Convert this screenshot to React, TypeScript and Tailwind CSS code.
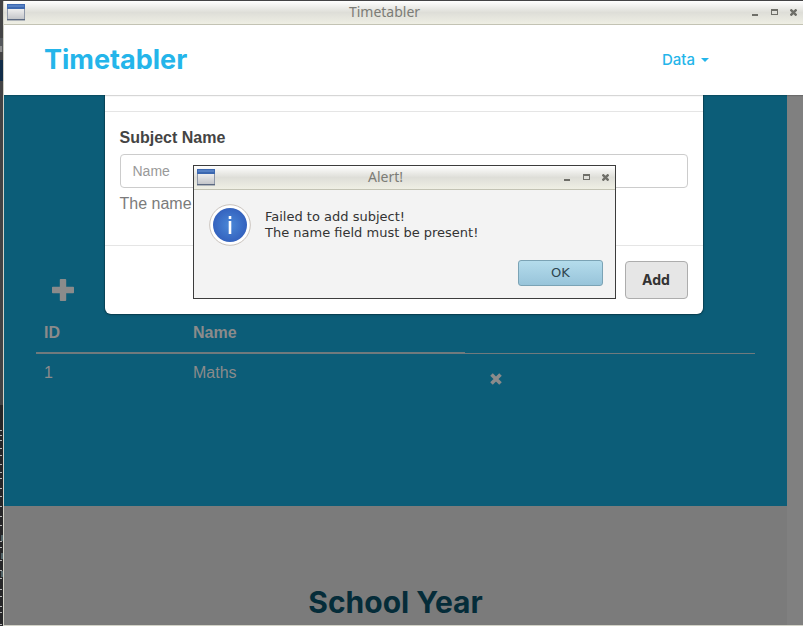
import React from "react";

function WindowIcon() {
  return (
    <svg width="18" height="17" viewBox="0 0 18 17" className="shrink-0" aria-hidden="true">
      <defs>
        <linearGradient id="winBody" x1="0" y1="0" x2="0" y2="1">
          <stop offset="0" stopColor="#eeeeee" />
          <stop offset="1" stopColor="#c4c6ca" />
        </linearGradient>
      </defs>
      <rect x="0" y="0" width="18" height="16" rx="1" fill="#8f98a8" />
      <rect x="1" y="5" width="16" height="10" fill="url(#winBody)" />
      <rect x="0" y="0" width="18" height="5" fill="#3c68b0" />
      <rect x="1" y="1" width="16" height="2" fill="#5580c4" />
      <rect x="0" y="15" width="18" height="1" fill="#5c6a82" />
      <rect x="0" y="16" width="18" height="1" fill="#5c6a82" opacity="0.4" />
    </svg>
  );
}

function TitleBar({ title }: { title: string }) {
  return (
    <div className="flex h-6 shrink-0 items-center border-b border-[#c3c3b4] bg-linear-to-b from-white via-[#deded8] to-[#efefe4] pr-1.5 pl-[3px]">
      <WindowIcon />
      <div className="flex-1 pr-2 pb-0.5 text-center font-['Noto_Sans',sans-serif] text-sm leading-5 text-[#7c7c76]">
        {title}
      </div>
      <div className="flex gap-3 text-[#6e6e68]">
        <button type="button" aria-label="Minimize">
          <svg width="7" height="7" viewBox="0 0 7 7">
            <rect x="0" y="5" width="6" height="2" fill="currentColor" />
          </svg>
        </button>
        <button type="button" aria-label="Maximize">
          <svg width="7" height="7" viewBox="0 0 7 7">
            <path d="M0 0h7v6H0zM1 2v3h5V2z" fill="currentColor" fillRule="evenodd" />
          </svg>
        </button>
        <button type="button" aria-label="Close">
          <svg width="7" height="7" viewBox="0 0 7 7">
            <path d="M.5.500l6 6M6.500.500l-6 6" stroke="currentColor" strokeWidth="2.400" />
          </svg>
        </button>
      </div>
    </div>
  );
}

function DesktopEdge() {
  const marks = [40, 45, 50, 58, 65, 74, 82, 88, 98, 106, 116, 126, 135, 151, 157, 170, 180, 188, 199, 206, 216, 222, 234];
  return (
    <svg width="3" height="626" viewBox="0 0 3 626" className="shrink-0" aria-hidden="true">
      <rect width="3" height="626" fill="#434345" />
      <rect y="38" width="3" height="14" fill="#55585c" />
      <rect y="46" width="2" height="6" fill="#8c8c8c" />
      <rect y="60" width="3" height="21" fill="#102c48" />
      <rect y="405" width="3" height="221" fill="#262628" />
      {marks.map((m) => (
        <rect key={m} y={390 + m} width="2" height="1" fill="#b4b4b4" />
      ))}
      <path d="M2 535v6M2 553v6M2 571v6" stroke="#7fa0a8" />
    </svg>
  );
}

function Plus() {
  return (
    <svg width="22" height="22" viewBox="0 0 22 22">
      <path
        d="M8.600 0h4.800q.8 0 .8.800v7h7q.8 0 .8.800v4.800q0 .8-.8.800h-7v7q0 .8-.8.800H8.600q-.8 0-.8-.8v-7h-7q-.8 0-.8-.8V8.600q0-.8.800-.8h7v-7q0-.8.800-.8z"
        fill="currentColor"
      />
    </svg>
  );
}

function Remove() {
  return (
    <svg width="12" height="12" viewBox="0 0 12 12">
      <path d="M1.500 1.500l9 9M10.500 1.500l-9 9" stroke="currentColor" strokeWidth="3.600" />
    </svg>
  );
}

function InfoIcon() {
  return (
    <svg width="42" height="42" viewBox="0 0 42 42" className="shrink-0" aria-hidden="true">
      <defs>
        <radialGradient id="info">
          <stop offset="0" stopColor="#4a88d8" />
          <stop offset="1" stopColor="#3462be" />
        </radialGradient>
      </defs>
      <circle cx="21" cy="21" r="20.300" fill="#fff" stroke="#c9c2bc" />
      <circle cx="21" cy="21" r="17" fill="url(#info)" />
      <rect x="19.700" y="12" width="2.600" height="3" fill="#fff" />
      <rect x="19.700" y="17" width="2.600" height="13" fill="#fff" />
    </svg>
  );
}

function SubjectsPage() {
  return (
    <div className="flex min-h-0 flex-1 bg-[#808080]">
      <div className="min-w-0 flex-1 bg-[#7b7b7b]">
        <section className="h-[411px] bg-[#0c5d78] px-8 pt-[184px] text-base text-[#8b8b8b]">
          <button type="button" aria-label="Add subject" className="ml-4 block text-[#8b8b8b]">
            <Plus />
          </button>
          <table className="mt-3 w-[720px] max-w-full table-fixed border-collapse text-left leading-6">
            <thead>
              <tr>
                <th className="w-[149px] border-b-2 border-[#707a7d] px-2 pt-2 pb-[7px]">ID</th>
                <th className="w-[280px] border-b-2 border-[#707a7d] px-2 pt-2 pb-[7px]">Name</th>
                <td />
              </tr>
            </thead>
            <tbody>
              <tr className="align-top">
                <td className="px-2 pt-[7px]">1</td>
                <td className="px-2 pt-[7px]">Maths</td>
                <td className="border-t border-[#707a7d] px-[25px] pt-[19px]">
                  <button type="button" aria-label="Delete Maths" className="block">
                    <Remove />
                  </button>
                </td>
              </tr>
            </tbody>
          </table>
        </section>
        <h2 className="pt-[78px] text-center font-[Inter,sans-serif] text-3xl leading-9 font-bold text-[#052c39]">
          School Year
        </h2>
      </div>
      <div className="w-4 shrink-0" />
    </div>
  );
}

function SubjectModal() {
  return (
    <form
      className="w-[598px] rounded-b-md bg-white pt-4 shadow-[0_0_0_1px_rgba(0,0,0,0.2),0_1px_3px_rgba(0,0,0,0.2)]"
      onSubmit={(e) => e.preventDefault()}
    >
      <div className="border-y border-[#e5e5e5] px-[15px] pt-3.5 pb-[29px]">
        <label htmlFor="subject" className="mb-1 block text-base leading-6 font-bold text-[#444]">
          Subject Name
        </label>
        <input
          id="subject"
          type="text"
          placeholder="Name"
          className="block h-[34px] w-full rounded border border-[#ccc] bg-white px-3 text-sm placeholder:text-[#999]"
        />
        <p className="mt-1 text-base leading-6 text-[#7b7b7b]">The name field is required.</p>
      </div>
      <div className="flex justify-end p-[15px]">
        <button
          type="submit"
          className="h-[38px] w-[63px] rounded border border-[#adadad] bg-[#e6e6e6] font-[Inter,sans-serif] text-sm font-bold text-[#333]"
        >
          Add
        </button>
      </div>
    </form>
  );
}

function AlertWindow() {
  return (
    <div
      role="alertdialog"
      aria-label="Alert!"
      className="w-[423px] border border-[#3c3c3c] bg-[#f3f3f3] font-['DejaVu_Sans',sans-serif] text-[13px] text-[#333]"
    >
      <TitleBar title="Alert!" />
      <div className="flex gap-3.5 px-[15px] pt-3.5">
        <InfoIcon />
        <p className="pt-[5px] leading-4">
          Failed to add subject!
          <br />
          The name field must be present!
        </p>
      </div>
      <div className="flex justify-end px-3 pt-3.5 pb-3">
        <button
          type="button"
          className="h-[26px] w-[85px] rounded-[3px] border border-[#7ba3b5] bg-linear-to-b from-[#b4dcec] to-[#98c4da] text-[#2f4650]"
        >
          OK
        </button>
      </div>
    </div>
  );
}

export default function App() {
  return (
    <div className="flex h-screen overflow-hidden bg-[#434345] font-['Liberation_Sans',Arial,sans-serif]">
      <DesktopEdge />
      <div className="mt-px flex min-w-0 flex-1 flex-col border-b border-l border-[#d3d3c8]">
        <TitleBar title="Timetabler" />
        <div className="relative flex min-h-0 flex-1 flex-col">
          <nav className="relative z-10 flex h-[70px] shrink-0 items-center justify-between bg-white pr-[94px] pl-10 font-[Inter,sans-serif] text-[#24b5ea] shadow-[0_1px_1px_rgba(0,0,0,0.16)]">
            <a href="#top" className="text-[27px] leading-9 font-bold">
              Timetabler
            </a>
            <a href="#data" className="flex items-center gap-1.5 text-[15px] font-medium">
              Data
              <svg width="8" height="4" viewBox="0 0 8 4" aria-hidden="true">
                <path d="M0 0h8L4 4z" fill="currentColor" />
              </svg>
            </a>
          </nav>
          <SubjectsPage />
          <div className="absolute inset-x-0 top-[70px] flex justify-center">
            <SubjectModal />
          </div>
          <div className="absolute inset-x-0 top-[140px] z-20 flex justify-center pl-0.5">
            <AlertWindow />
          </div>
        </div>
      </div>
    </div>
  );
}
